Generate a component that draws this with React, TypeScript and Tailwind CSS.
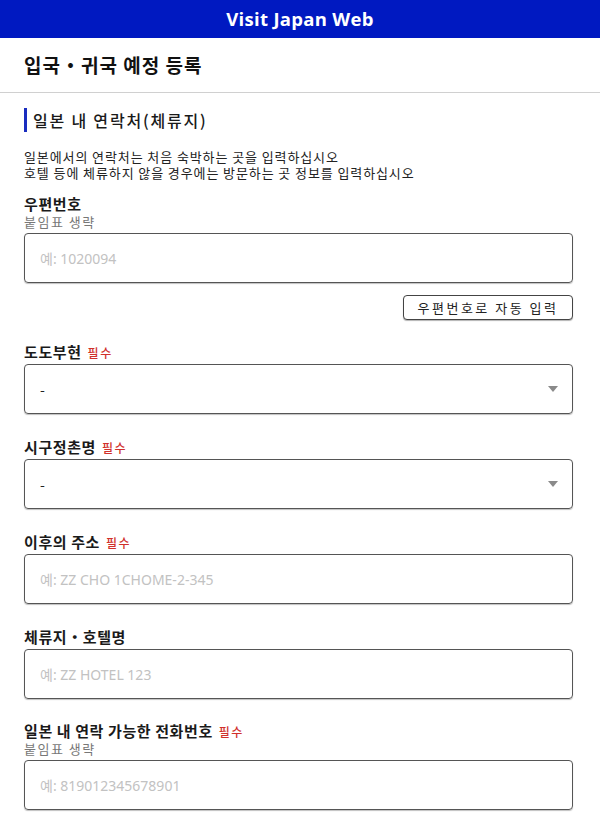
import React from "react";

const KR = { fontFamily: '"Noto Sans CJK KR", "Noto Sans", sans-serif' };

function Label({ text, required }: { text: string; required?: boolean }) {
  return (
    <div className="h-[20px] leading-[20px] text-[15px] font-bold tracking-[0.6px] text-[#1a1a1a]">
      {text}
      {required && (
        <span className="ml-[6px] text-[12px] font-medium tracking-[1.5px] text-[#d0302b]">필수</span>
      )}
    </div>
  );
}

function Sub() {
  return <div className="h-[16px] leading-[16px] text-[13px] tracking-[1.5px] text-[#777]">붙임표 생략</div>;
}

function Input({ placeholder }: { placeholder: string }) {
  return (
    <input
      placeholder={placeholder}
      className="block w-full h-[50px] rounded-[4px] border border-[#555] shadow-[0_1px_1px_rgba(0,0,0,0.25)] px-[15px] text-[14px] text-[#222] placeholder:text-[#c2c2c2] outline-none"
      style={{ fontFamily: '"Noto Sans", "Noto Sans CJK KR", sans-serif' }}
    />
  );
}

function Select() {
  return (
    <div className="relative flex items-center w-full h-[50px] rounded-[4px] border border-[#555] shadow-[0_1px_1px_rgba(0,0,0,0.25)] px-[15px] text-[14px] text-[#222]">
      <span>-</span>
      <svg className="absolute right-[14px] top-[21px]" width="10" height="6" viewBox="0 0 10 6">
        <path d="M0 0 H10 L5 6 Z" fill="#8a8a8a" />
      </svg>
    </div>
  );
}

export default function App() {
  return (
    <div className="w-[600px] min-h-[824px] bg-white" style={KR}>
      <div className="h-[38px] bg-[#0019c1] flex items-center justify-center">
        <span
          className="text-white text-[18.5px] font-bold tracking-[0.3px]"
          style={{ fontFamily: '"Open Sans", "Noto Sans", sans-serif' }}
        >
          Visit Japan Web
        </span>
      </div>
      <div className="h-[55px] flex items-center px-[24px] border-b border-[#d0d0d0]">
        <span className="text-[19px] font-bold tracking-[1px] text-[#111]">입국・귀국 예정 등록</span>
      </div>
      <div className="pl-[24px] pr-[27px]">
        <div className="mt-[15px] h-[24px] flex items-center border-l-[3px] border-[#1a2dbf] pl-[6px]">
          <span className="text-[16px] font-medium tracking-[1.8px] text-[#1a1a1a]">일본 내 연락처(체류지)</span>
        </div>
        <div className="mt-[17px] text-[13px] leading-[15.5px] tracking-[0.9px] text-[#222]">
          <div>일본에서의 연락처는 처음 숙박하는 곳을 입력하십시오</div>
          <div>호텔 등에 체류하지 않을 경우에는 방문하는 곳 정보를 입력하십시오</div>
        </div>
        <div className="mt-[14px]">
          <Label text="우편번호" />
          <Sub />
          <div className="mt-[3px]">
            <Input placeholder="예: 1020094" />
          </div>
          <div className="flex justify-end mt-[12px]">
            <button className="h-[25px] w-[170px] rounded-[4px] border border-[#444] shadow-[0_1px_1px_rgba(0,0,0,0.3)] text-[13px] text-[#222] tracking-[2.5px] bg-white">
              우편번호로 자동 입력
            </button>
          </div>
        </div>
        <div className="mt-[22px]">
          <Label text="도도부현" required />
          <div className="mt-[2px]"><Select /></div>
        </div>
        <div className="mt-[23px]">
          <Label text="시구정촌명" required />
          <div className="mt-[2px]"><Select /></div>
        </div>
        <div className="mt-[23px]">
          <Label text="이후의 주소" required />
          <div className="mt-[2px]"><Input placeholder="예: ZZ CHO 1CHOME-2-345" /></div>
        </div>
        <div className="mt-[23px]">
          <Label text="체류지・호텔명" />
          <div className="mt-[2px]"><Input placeholder="예: ZZ HOTEL 123" /></div>
        </div>
        <div className="mt-[22px]">
          <Label text="일본 내 연락 가능한 전화번호" required />
          <Sub />
          <div className="mt-[3px]"><Input placeholder="예: 819012345678901" /></div>
        </div>
      </div>
    </div>
  );
}
